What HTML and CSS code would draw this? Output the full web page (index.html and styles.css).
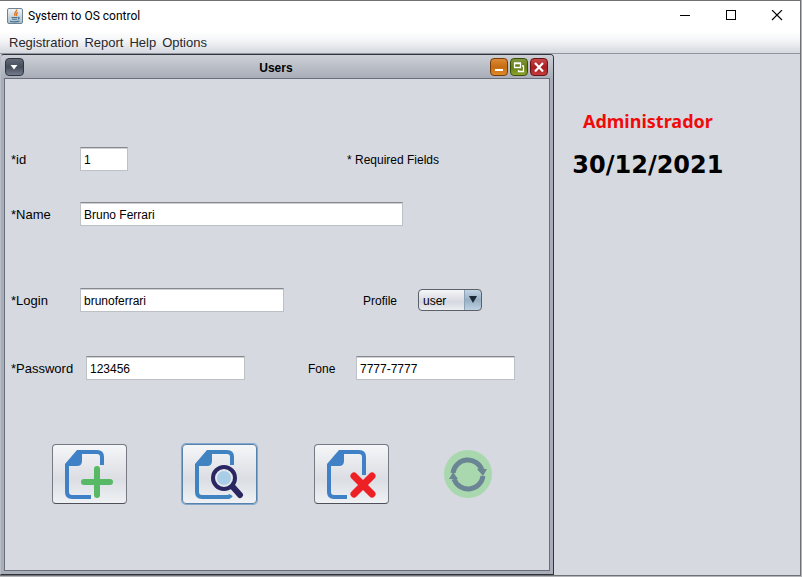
FILE: index.html
```html
<!DOCTYPE html>
<html lang="en">
<head>
<meta charset="utf-8">
<title>System to OS control</title>
<link rel="stylesheet" href="styles.css">
</head>
<body>
<div class="window">
  <header class="titlebar">
    <svg class="app-icon" viewBox="0 0 16 16" aria-hidden="true">
      <defs><linearGradient id="tile" x2="0" y2="1"><stop offset="0" stop-color="#f2f5f8"/><stop offset="1" stop-color="#a9bccb"/></linearGradient></defs>
      <rect x=".5" y=".5" width="15" height="15" rx="1.5" fill="url(#tile)" stroke="#6e8392"/>
      <path d="M9.500 1.500c1 2.500-3.500 3-1.500 6.500M11 4.500c-2 1-2 2-1 3.500" fill="none" stroke="#e27a26" stroke-width="1.400"/>
      <path d="M4.500 9.500h6M5 11.200h5M3 13.300q5 1.200 9.500-.3M11 9q2.500.500 0 2.200" fill="none" stroke="#45718f" stroke-width="1.100"/>
    </svg>
    <h1 class="app-title">System to OS control</h1>
    <div class="window-controls">
      <button type="button" class="window-button" aria-label="Minimize"><svg width="12" height="12" viewBox="0 0 12 12"><path d="M1 5.500h10" stroke="#000"/></svg></button>
      <button type="button" class="window-button" aria-label="Maximize"><svg width="12" height="12" viewBox="0 0 12 12"><rect x="1.500" y=".5" width="9" height="9" fill="none" stroke="#000"/></svg></button>
      <button type="button" class="window-button" aria-label="Close"><svg width="12" height="12" viewBox="0 0 12 12"><path d="M1 0l10 10M11 0L1 10" stroke="#000" stroke-width="1.100"/></svg></button>
    </div>
  </header>
  <nav class="menubar">
    <button type="button" class="menu">Registration</button>
    <button type="button" class="menu">Report</button>
    <button type="button" class="menu">Help</button>
    <button type="button" class="menu">Options</button>
  </nav>
  <main class="desktop">
    <section class="frame">
      <header class="frame-title">
        <button type="button" class="frame-button system" aria-label="Window menu"><svg viewBox="0 0 18 18"><path d="M5.500 7h7L9 11.500z" fill="#fff"/></svg></button>
        <h2 class="frame-name">Users</h2>
        <div class="frame-controls">
          <button type="button" class="frame-button minimize" aria-label="Minimize"><svg viewBox="0 0 18 18"><path d="M5 12h8" stroke="#fff" stroke-width="2"/></svg></button>
          <button type="button" class="frame-button restore" aria-label="Restore"><svg viewBox="0 0 18 18"><path d="M4.500 5.500h6v4h-6zM12 8h1.500v5.500h-5V12M4 5h7" fill="none" stroke="#fff" stroke-width="1.300"/></svg></button>
          <button type="button" class="frame-button close" aria-label="Close"><svg viewBox="0 0 18 18"><path d="M5 5l8 8.500M13 5l-8 8.500" stroke="#fff" stroke-width="2.200"/></svg></button>
        </div>
      </header>
      <form class="form">
        <div class="row id-row">
          <label class="label" for="id">*id</label>
          <input class="field id-field" id="id" value="1">
          <span class="hint">* Required Fields</span>
        </div>
        <div class="row name-row">
          <label class="label" for="name">*Name</label>
          <input class="field name-field" id="name" value="Bruno Ferrari">
        </div>
        <div class="row login-row">
          <label class="label" for="login">*Login</label>
          <input class="field login-field" id="login" value="brunoferrari">
          <label class="profile-label" for="profile">Profile</label>
          <span class="combo">
            <select class="select" id="profile"><option>user</option></select>
          </span>
        </div>
        <div class="row password-row">
          <label class="label wide" for="password">*Password</label>
          <input class="field" id="password" value="123456">
          <label class="fone-label" for="fone">Fone</label>
          <input class="field" id="fone" value="7777-7777">
        </div>
        <div class="actions">
          <button type="button" class="action" aria-label="Add user">
            <svg viewBox="1 0 50 50"><g fill="none" stroke="#3f80c6" stroke-width="4"><path d="M15 3H33Q38 3 38 8V16M27 48H8Q3 48 3 43V16"/></g><path d="M1 19V15L13 1H18V12Q18 17 13 17H5V19z" fill="#3f80c6"/><path d="M33 20V46M20 33H46" stroke="#57b966" stroke-width="6" stroke-linecap="round"/></svg>
          </button>
          <button type="button" class="action focused" aria-label="Search user">
            <svg viewBox="1 0 50 50"><g fill="none" stroke="#4083c1" stroke-width="4"><path d="M15 3H33Q38 3 38 8V16M37 46Q36 48 33 48H8Q3 48 3 43V16"/></g><path d="M1 19V15L13 1H18V12Q18 17 13 17H5V19z" fill="#4083c1"/><path d="M38 37L46 46" stroke="#292662" stroke-width="6" stroke-linecap="round"/><circle cx="30" cy="29" r="11" fill="#e5e7ea" stroke="#292662" stroke-width="4"/><circle cx="30" cy="29" r="7" fill="#a9cde6"/></svg>
          </button>
          <button type="button" class="action" aria-label="Delete user">
            <svg viewBox="1 0 50 50"><g fill="none" stroke="#3f80c6" stroke-width="4"><path d="M15 3H33Q38 3 38 8V26M21 48H8Q3 48 3 43V16"/></g><path d="M1 19V15L13 1H18V12Q18 17 13 17H5V19z" fill="#3f80c6"/><path d="M28 27L46 45M46 27L28 45" stroke="#ed2025" stroke-width="7" stroke-linecap="round"/></svg>
          </button>
          <button type="button" class="refresh" aria-label="Update user">
            <svg viewBox="0 0 48 48"><circle cx="24" cy="24" r="24" fill="#a9d8ae"/><g fill="none" stroke="#6b8595" stroke-width="5"><path d="M9 23A15 15 0 0 1 38 20M39 26A15 15 0 0 1 10 29"/></g><path d="M33 19L43 19L39 26zM5 29L9 22L14 29z" fill="#6b8595"/></svg>
          </button>
        </div>
      </form>
    </section>
    <aside class="session">
      <p class="user">Administrador</p>
      <p class="date">30/12/2021</p>
    </aside>
  </main>
</div>
</body>
</html>
```
FILE: styles.css
```css
* { box-sizing: border-box; }

body {
  margin: 0;
  padding: 0 1px 1px 0;
  background: #b4b5b9;
  font: 12px/16px "Liberation Sans", sans-serif;
  color: #000;
}

button, input, select { font: inherit; color: inherit; }
button { padding: 0; border: 0; background: none; }
svg { display: block; }

.window {
  display: flex;
  flex-direction: column;
  min-height: calc(100vh - 1px);
  border: 1px solid #707175;
  border-left: 0;
  background: #d6d9e0;
}

.titlebar {
  display: flex;
  align-items: center;
  height: 30px;
  padding-left: 7px;
  background: #fff;
}
.app-icon { width: 16px; height: 16px; margin-right: 5px; }
.app-title { margin: 0; font: 12px/16px Roboto, sans-serif; }
.window-controls { display: flex; margin-left: auto; }
.window-button { display: grid; place-items: center; width: 46px; height: 28px; }

.menubar {
  display: flex;
  gap: 6px;
  height: 23px;
  padding: 0 9px;
  border-bottom: 1px solid #92959d;
  background: linear-gradient(#fff, #f5f6f8 40%, #d6d9e0);
}
.menu { padding-top: 1px; font-size: 13px; color: #26282d; }

.desktop {
  flex: 1;
  display: grid;
  grid-template-columns: 9fr 4fr;
}

.frame {
  display: flex;
  flex-direction: column;
  padding: 0 3px 3px;
  border: 1px solid #30343d;
  border-left-color: #b8bdc7;
  border-radius: 4px 4px 0 0;
  background: #a8adb8;
}
.frame-title {
  display: flex;
  align-items: center;
  height: 23px;
  margin: 0 -3px;
  padding: 0 5px 0 4px;
  border-radius: 3px 3px 0 0;
  background: linear-gradient(#cdd0d6, #a8adb8);
}
.frame-name { flex: 1; margin: 0; padding: 2px 0 0 38px; text-align: center; font-size: 12px; }
.frame-controls { display: flex; gap: 2px; }
.frame-button {
  width: 18px;
  height: 18px;
  border: 1px solid #303641;
  border-radius: 4px;
}
.frame-button svg { width: 18px; height: 18px; margin: -1px; }
.system { width: 19px; background: linear-gradient(#626977, #454c5a 50%, #747c8b); }
.minimize { border-color: #733c0c; background: linear-gradient(#dc8b37, #c56c12 50%, #e08a25); }
.restore { border-color: #3c500c; background: linear-gradient(#83983d, #647d14 50%, #8da32c); }
.close { border-color: #651317; background: linear-gradient(#c8484a, #a91d22 50%, #c63a3c); }

.form {
  flex: 1;
  display: flex;
  flex-direction: column;
  padding: 68px 6px 0;
  border: 1px solid #696f7b;
  background: #d6d9e0;
}
.row { display: flex; align-items: center; height: 24px; }
.row label, .hint { padding-top: 2px; }
.name-row { margin-top: 31px; }
.login-row { margin-top: 62px; }
.password-row { margin-top: 44px; }
.label { width: 69px; font-size: 13px; }
.wide { width: 75px; }
.field {
  width: 159px;
  height: 24px;
  padding: 2px 3px 0;
  border: 1px solid #bcc0c7;
  border-top-color: #85888f;
  background: #fff;
  box-shadow: inset 0 1px #cfd1d5;
}
.id-field { width: 48px; }
.name-field { width: 323px; }
.login-field { width: 204px; }
.hint { margin-left: 219px; }
.profile-label { width: 55px; margin-left: 79px; }
.fone-label { width: 48px; margin-left: 63px; }

.combo { position: relative; }
.combo::after {
  content: "";
  position: absolute;
  top: 7px;
  right: 5px;
  border: solid transparent;
  border-width: 7px 4px 0;
  border-top-color: #1c2833;
  pointer-events: none;
}
.select {
  display: block;
  width: 64px;
  height: 22px;
  padding: 1px 4px 0;
  appearance: none;
  border: 1px solid #5c6069;
  border-radius: 4px;
  background:
    linear-gradient(90deg, #8ba2b8 1px, transparent 1px) right / 17px 100% no-repeat,
    linear-gradient(#c5d5e4, #97afc4 50%, #bed2e2) right / 17px 100% no-repeat,
    linear-gradient(#f5f6f8, #d5d8df 60%, #eceef2);
}

.actions {
  display: flex;
  align-items: center;
  gap: 55px;
  margin-top: 64px;
  padding-left: 41px;
}
.action {
  display: grid;
  place-items: center;
  width: 75px;
  height: 60px;
  border: 1px solid #767a83;
  border-bottom-color: #4d5058;
  border-radius: 4px;
  background: linear-gradient(#f5f6f8, #dfe1e6 50%, #dbdee4 60%, #eff1f4);
}
.action svg { width: 50px; height: 50px; }
.focused {
  margin-right: 2px;
  border-color: #5583ad;
  box-shadow: 0 0 0 1px #82a7cb;
}
.refresh svg { width: 48px; height: 48px; }

.session {
  padding: 57px 58px 0 0;
  font-weight: bold;
  text-align: center;
}
.user { margin: 0 0 19px; font-family: "Noto Sans", sans-serif; font-size: 18px; line-height: 20px; color: #f00b0b; }
.date { margin: 0; font-family: "DejaVu Sans", sans-serif; font-size: 24px; line-height: 30px; }
```
